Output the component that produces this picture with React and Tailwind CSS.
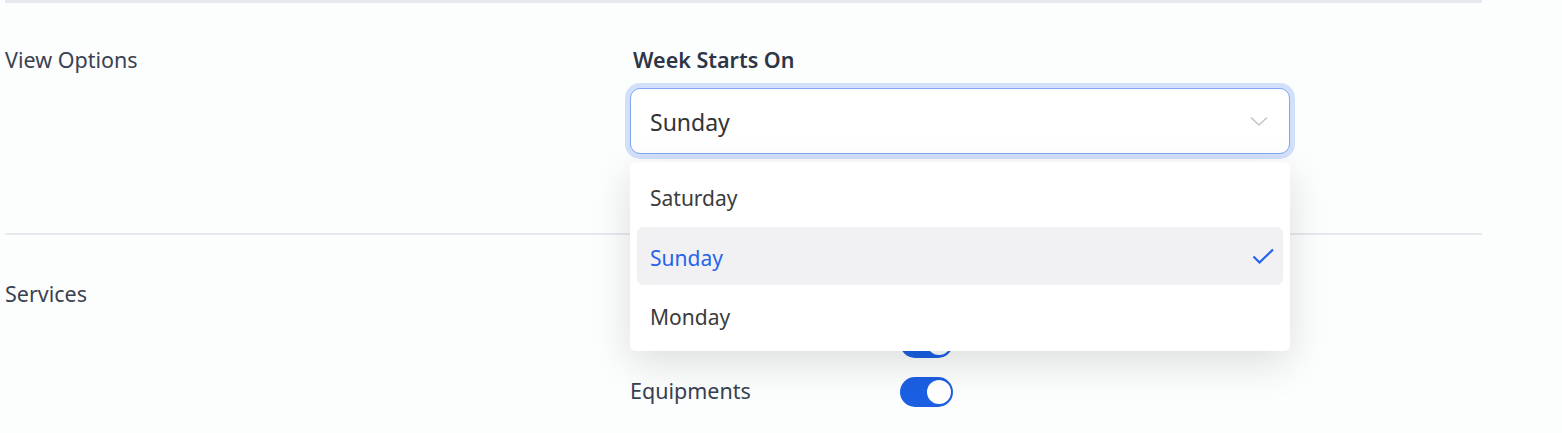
import React from "react";

function Toggle() {
  return (
    <div className="relative h-[30px] w-[53px] rounded-full bg-[#1b5fe3]">
      <div className="absolute right-[2px] top-[3px] h-[24px] w-[24px] rounded-full bg-white" />
    </div>
  );
}

export default function App() {
  const font = { fontFamily: '"Noto Sans", "Open Sans", sans-serif' };
  return (
    <div className="min-h-screen bg-[#fcfdfd] pl-[5px]" style={font}>
      <div className="w-[1477px]">
        <section className="grid grid-cols-[625px_1fr] border-t-[3px] border-[#e6e8ee] pt-[43px] pb-[79px]">
          <div className="text-[21.5px] leading-[28px] text-[#3a4252]">View Options</div>
          <div>
            <div className="pl-[3px] text-[21.5px] font-semibold leading-[28px] text-[#2d3646]">Week Starts On</div>
            <div className="relative mt-[14px] w-[660px]">
              <div className="flex h-[66px] items-center justify-between rounded-[10px] border border-[#80a7f1] bg-white pl-[19px] pr-[21px] shadow-[0_0_0_5px_#d3e0fa]">
                <span className="pt-[2px] text-[23px] text-[#333333]">Sunday</span>
                <svg width="18" height="10" viewBox="0 0 18 10" fill="none">
                  <path d="M1 1.5 L9 9 L17 1.5" stroke="#c4c4c4" strokeWidth="1.5" />
                </svg>
              </div>
              <div className="absolute left-0 top-[74px] z-10 w-[660px] rounded-[6px] bg-white px-[7px] py-[6px] shadow-[0_12px_40px_rgba(0,0,0,0.13)]">
                <div className="flex h-[59px] items-center pl-[13px] pt-[3px] text-[21px] text-[#3b3b3b]">Saturday</div>
                <div className="flex h-[58px] items-center justify-between rounded-[6px] bg-[#f1f1f4] pl-[13px] pr-[9px] text-[21px] text-[#2563eb]">
                  <span className="pt-[5px]">Sunday</span>
                  <svg width="22" height="16" viewBox="0 0 22 16" fill="none">
                    <path d="M1.5 8.5 L7.5 14.5 L21 1.5" stroke="#2563eb" strokeWidth="2.2" />
                  </svg>
                </div>
                <div className="flex h-[60px] items-center pl-[13px] pt-[5px] text-[21px] text-[#3b3b3b]">Monday</div>
              </div>
            </div>
          </div>
        </section>
        <section className="grid grid-cols-[625px_1fr] border-t-[2px] border-[#e8e9ee] pt-[44px] pb-[26px]">
          <div className="text-[21.5px] leading-[30px] text-[#3a4252]">Services</div>
          <div className="flex flex-col gap-[19px]">
            {["", "", "Equipments"].map((s, i) => (
              <div key={i} className="flex items-center">
                <div className="h-[30px] w-[270px] -translate-y-[1px] text-[21.5px] leading-[30px] text-[#374151]">{s}</div>
                <Toggle />
              </div>
            ))}
          </div>
        </section>
      </div>
    </div>
  );
}
